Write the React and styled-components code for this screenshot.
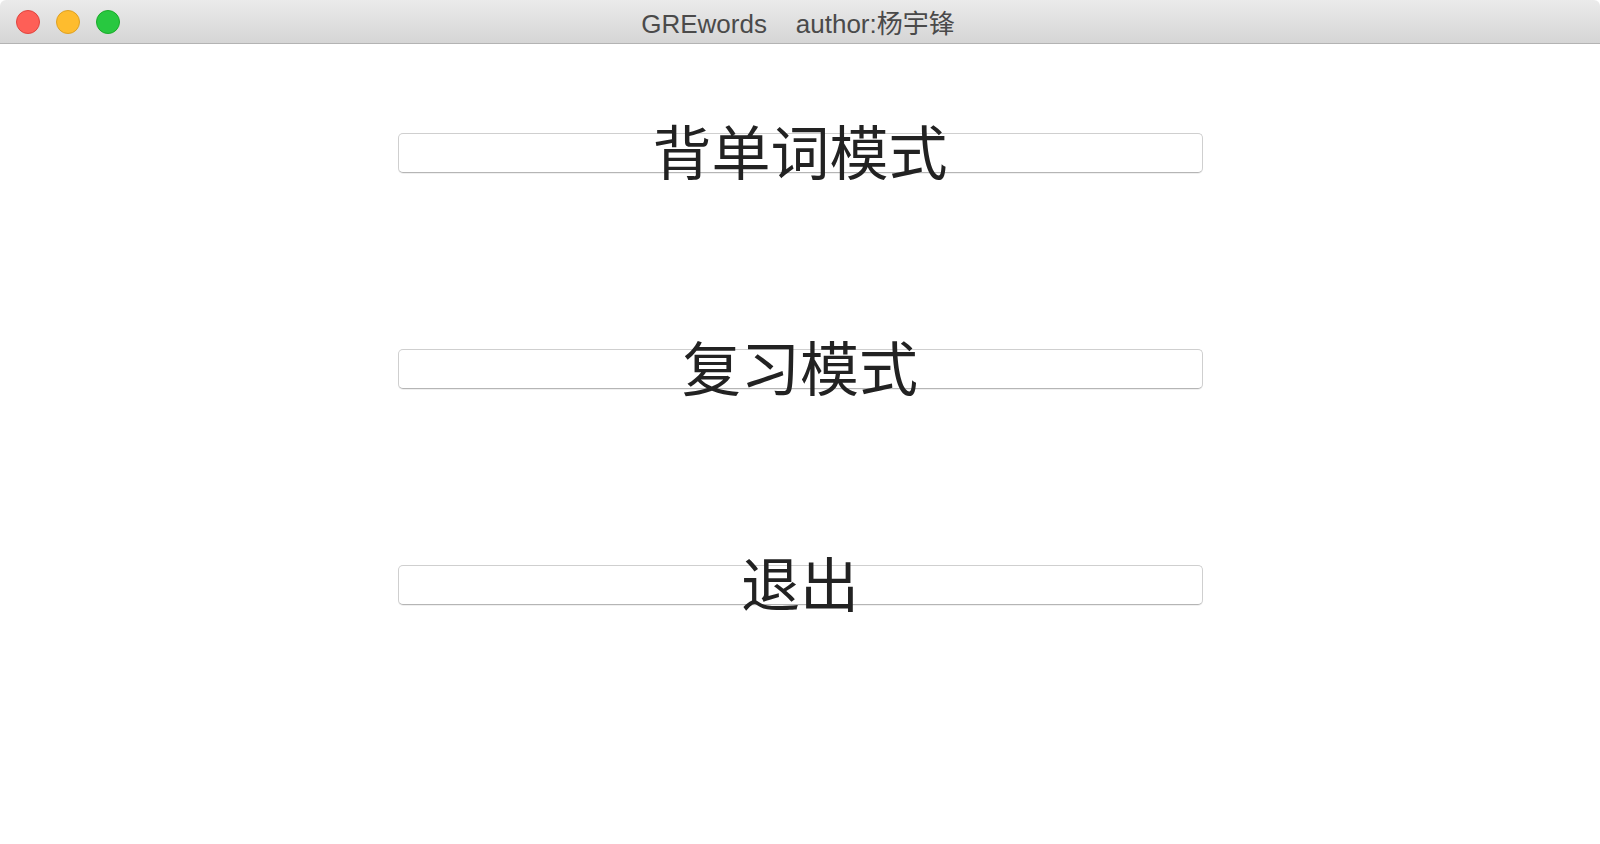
import styled, { createGlobalStyle } from "styled-components";

const GlobalStyle = createGlobalStyle`
  html, body {
    margin: 0;
    padding: 0;
    background: #ffffff;
    font-family: "Liberation Sans", "Noto Sans CJK SC", sans-serif;
  }
`;

const Window = styled.div`
  width: 1600px;
  height: 844px;
  display: flex;
  flex-direction: column;
  background: #ffffff;
  overflow: hidden;
`;

const TitleBar = styled.div`
  position: relative;
  height: 43px;
  flex-shrink: 0;
  display: flex;
  align-items: center;
  justify-content: center;
  background: linear-gradient(#ebebeb, #d5d5d5);
  border-bottom: 1px solid #b3b3b3;
  border-radius: 6px 6px 0 0;
`;

const Lights = styled.div`
  position: absolute;
  left: 16px;
  top: 10px;
  display: flex;
  gap: 16px;
`;

const Light = styled.span`
  width: 24px;
  height: 24px;
  border-radius: 50%;
  box-sizing: border-box;
  background: ${(p) => p.$color};
  border: 1px solid ${(p) => p.$edge};
`;

const Title = styled.div`
  font-size: 26px;
  color: #4a4a4a;
  white-space: pre;
  padding-right: 4px;
  font-family: "Liberation Sans", "Noto Sans CJK SC", sans-serif;
`;

const Menu = styled.div`
  display: flex;
  flex-direction: column;
  align-items: center;
  gap: 176px;
  padding-top: 89px;
`;

const ModeButton = styled.button`
  width: 805px;
  height: 40px;
  padding: 0;
  display: flex;
  align-items: center;
  justify-content: center;
  background: #ffffff;
  border: 1px solid #cfcfcf;
  border-bottom-color: #b5b5b5;
  border-radius: 5px;
  box-shadow: 0 1px 0 rgba(0, 0, 0, 0.06);
  overflow: visible;
  cursor: pointer;
`;

const Label = styled.span`
  font-family: "Noto Sans CJK SC", sans-serif;
  font-size: 59px;
  line-height: 40px;
  padding-bottom: 6px;
  color: #222222;
  white-space: nowrap;
`;

const modes = ["背单词模式", "复习模式", "退出"];

export default function App() {
  return (
    <Window>
      <GlobalStyle />
      <TitleBar>
        <Lights>
          <Light $color="#fe5f57" $edge="#e0443e" />
          <Light $color="#febc2e" $edge="#dea123" />
          <Light $color="#28c840" $edge="#1aab29" />
        </Lights>
        <Title>{"GREwords    author:杨宇锋"}</Title>
      </TitleBar>
      <Menu>
        {modes.map((m) => (
          <ModeButton key={m}>
            <Label>{m}</Label>
          </ModeButton>
        ))}
      </Menu>
    </Window>
  );
}
